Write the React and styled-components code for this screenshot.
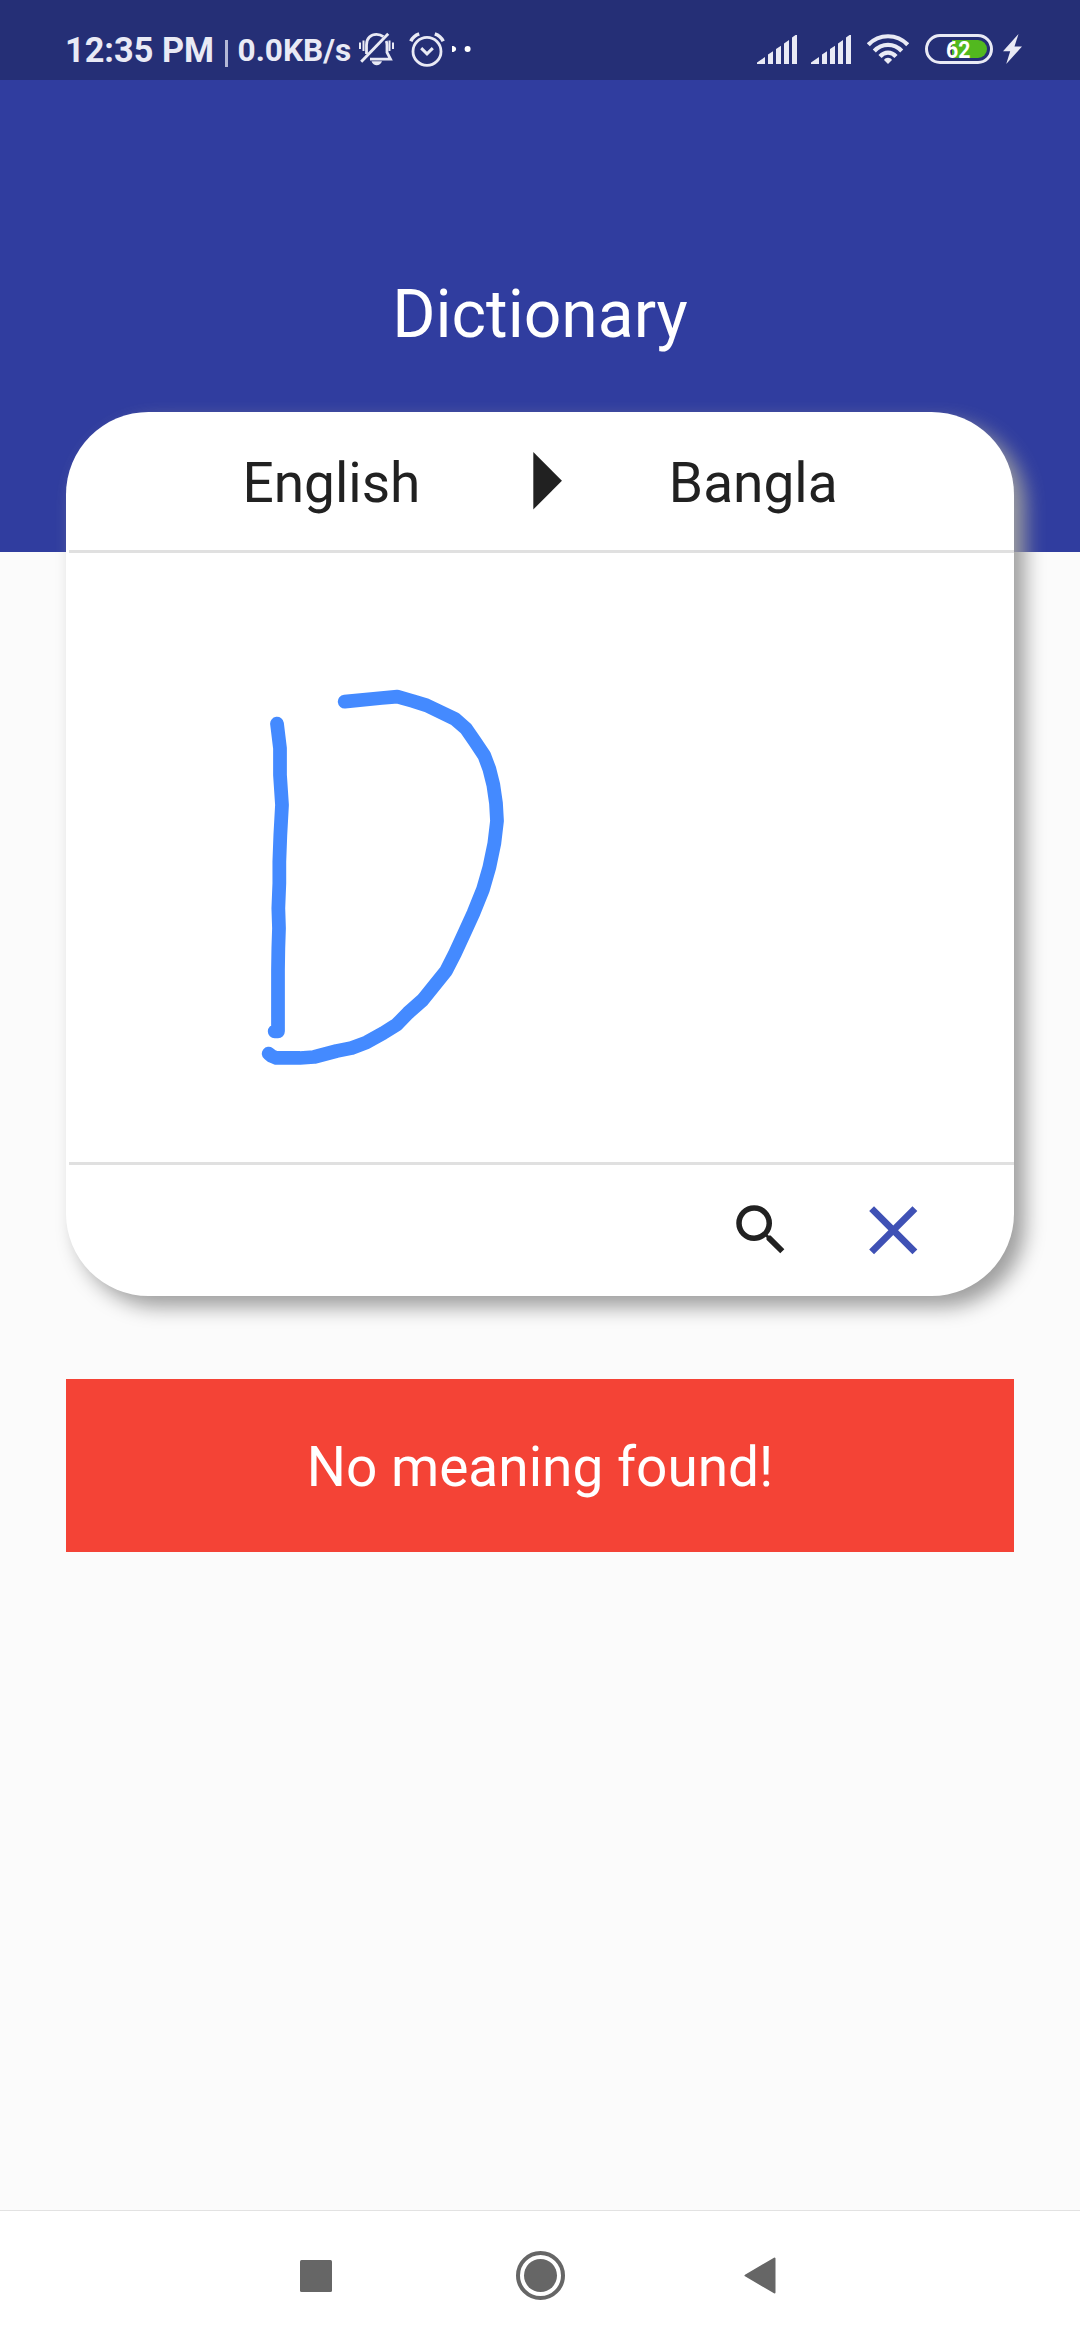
import React from "react";
import styled, { createGlobalStyle } from "styled-components";

const GlobalStyle = createGlobalStyle`
  * { box-sizing: border-box; }
  body { margin: 0; background: #fbfbfb; font-family: Roboto, "Noto Sans", sans-serif; }
  svg { display: block; flex: none; }
`;

const Screen = styled.div`
  width: 1080px;
  height: 2340px;
  display: flex;
  flex-direction: column;
  overflow: hidden;
  background: #fbfbfb;
`;

const StatusBar = styled.header`
  height: 80px;
  flex: none;
  padding: 18px 58px 0 65px;
  display: flex;
  align-items: center;
  justify-content: space-between;
  background: #252f76;
  color: #e9eaf5;
`;

const StatusGroup = styled.div`
  display: flex;
  align-items: center;
  height: 62px;
`;

const StatusText = styled.span`
  font-size: ${(p) => p.$size}px;
  line-height: 40px;
  font-weight: 700;
  white-space: pre;
  width: ${(p) => p.$width}px;
  padding-top: ${(p) => p.$drop || 0}px;
`;

const Pipe = styled.span`
  width: 3px;
  height: 27px;
  margin: 8px 10px 0 10px;
  background: #b4b8d6;
`;

const Spacer = styled.span`
  width: ${(p) => p.$w}px;
`;

const Battery = styled.div`
  position: relative;
  width: 68px;
  height: 30px;
  border: 3px solid #e9eaf5;
  border-radius: 15px;
  display: flex;
  align-items: center;
  justify-content: flex-end;
  padding: 0 3px;
`;

const Charge = styled.span`
  width: 35px;
  height: 18px;
  border-radius: 0 9px 9px 0;
  background: #52b81f;
`;

const BatteryLevel = styled.span`
  position: absolute;
  left: 18px;
  top: 0;
  font-size: 24.5px;
  font-weight: 700;
  line-height: 25px;
  color: #fff;
  transform: scaleX(0.87);
  transform-origin: left;
`;

const TitleBar = styled.div`
  height: 472px;
  flex: none;
  padding-top: 195px;
  background: #303d9f;
  text-align: center;
`;

const Title = styled.h1`
  margin: 0;
  font-size: 66px;
  font-weight: 400;
  line-height: 80px;
  color: #fff;
`;

const Main = styled.main`
  flex: 1;
  padding: 0 66px;
  margin-top: -140px;
`;

const Card = styled.section`
  position: relative;
  height: 884px;
  display: flex;
  flex-direction: column;
  background: #fff;
  border-radius: 82.5px;
  box-shadow: 11px 11px 20px #9e9e9e;
`;

const LanguageRow = styled.div`
  height: 138px;
  display: flex;
  align-items: center;
  justify-content: center;
  gap: 55.5px;
`;

const Language = styled.span`
  padding-top: 4px;
  font-size: 55px;
  line-height: 66px;
  color: #212121;
`;

const Divider = styled.hr`
  width: 945px;
  height: 3px;
  margin: 0 0 0 3px;
  border: 0;
  flex: none;
  background: #e0e0e0;
`;

const Canvas = styled.div`
  height: 608.5px;
`;

const Actions = styled.div`
  flex: 1;
  padding-right: 79.5px;
  display: flex;
  align-items: center;
  justify-content: flex-end;
  gap: 58px;
`;

const IconButton = styled.button`
  padding: 0;
  border: 0;
  background: none;
  color: ${(p) => p.$color};
`;

const Notice = styled.div`
  margin-top: 83px;
  height: 173px;
  padding-top: 3px;
  display: flex;
  align-items: center;
  justify-content: center;
  background: #f44336;
  color: #fff;
  font-size: 55px;
`;

const NavBar = styled.nav`
  height: 130px;
  flex: none;
  border-top: 1px solid #e2e2e2;
  background: #fff;
  display: flex;
  align-items: center;
  padding-left: 300px;
`;

const Signal = () => (
  <svg width="40" height="29" viewBox="0 0 40 29" fill="currentColor">
    <path d="M0 29V27.5L8 22V29ZM11 29V19.5L16 16.2V29ZM19 29V14L24 10.8V29ZM27 29V8.5L32 5V29ZM35 29V2.5L38.5 0H40V29Z" />
  </svg>
);

const MutedBell = () => (
  <svg width="35" height="34" viewBox="0 0 35 34" fill="none" stroke="currentColor" strokeWidth="2.8">
    <path d="M7.5 22V13C7.5 6 12 2.3 17.5 2.3C20.5 2.3 22.5 3.2 24.3 4.7M27.2 9C27.8 10.4 28 11.8 28 13.4V20.5L31.5 27.2H11" />
    <path d="M29.2 1.7L2.2 29.8" strokeWidth="2.9" />
    <path d="M4.5 8.5V19M30.5 8.5V19" strokeWidth="2" />
    <path d="M1 10.5V17M34 10.5V17" strokeWidth="2" />
    <path d="M12.5 29.3H23C22 32 20 33.2 17.7 33.2S13.5 32 12.5 29.3Z" fill="currentColor" stroke="none" />
  </svg>
);

const Alarm = () => (
  <svg width="36" height="35" viewBox="0 0 36 35" fill="none" stroke="currentColor" strokeWidth="2.8">
    <circle cx="18" cy="19.4" r="14" />
    <path d="M12.2 16.2L18 21.8L23.8 16.2" strokeWidth="3" />
    <path d="M1.8 9.2C3.4 5.8 6.6 3 10.2 1.8M34.2 9.2C32.6 5.8 29.4 3 25.8 1.8" strokeWidth="3.5" />
  </svg>
);

const Overflow = () => (
  <svg width="19" height="6" viewBox="0 0 19 6" fill="#fff">
    <path d="M0 0H1.5Q4.2 0.8 4.2 3T1.5 6H0Z" />
    <circle cx="15.6" cy="3" r="3" />
  </svg>
);

const Wifi = () => (
  <svg width="42" height="30" viewBox="0 0 42 30" fill="none" stroke="currentColor" strokeWidth="4.2">
    <path d="M1.3 10.8C12 -0.6 30 -0.6 40.7 10.8" />
    <path d="M7.3 17C15 8.8 27 8.8 34.7 17" />
    <path d="M13 22.5C17.7 17.3 24.3 17.3 29 22.5" />
    <path d="M17 26C18.5 23 23.5 23 25 26L21 30Z" fill="currentColor" stroke="none" />
  </svg>
);

const Bolt = () => (
  <svg width="19" height="30" viewBox="0 0 19 30" fill="currentColor">
    <path d="M15.5 0L0 17.2H7.2L3.2 30L19 12.6H11.5Z" />
  </svg>
);

const RightArrow = () => (
  <svg width="137.5" height="137.5" viewBox="0 0 24 24" fill="#212121">
    <path d="M10 17l5-5-5-5v10z" />
  </svg>
);

const SearchIcon = () => (
  <svg width="66" height="66" viewBox="0 0 24 24" fill="currentColor">
    <path d="M15.5 14h-.79l-.28-.27A6.471 6.471 0 0 0 16 9.5 6.5 6.5 0 1 0 9.5 16c1.61 0 3.09-.59 4.23-1.57l.27.28v.79l5 4.99L20.49 19l-4.99-5zm-6 0C7.01 14 5 11.99 5 9.5S7.01 5 9.5 5 14 7.01 14 9.5 11.99 14 9.5 14z" />
  </svg>
);

const ClearIcon = () => (
  <svg width="82.5" height="82.5" viewBox="0 0 24 24" fill="currentColor">
    <path d="M19 6.41L17.59 5 12 10.59 6.41 5 5 6.41 10.59 12 5 17.59 6.41 19 12 13.41 17.59 19 19 17.59 13.41 12z" />
  </svg>
);

const Handwriting = () => (
  <svg width="948" height="608.5" viewBox="66 553 948 608.5">
    <g
      transform="translate(240 670) scale(0.33333)"
      fill="none"
      stroke="#448aff"
      strokeWidth="41.25"
      strokeLinecap="round"
      strokeLinejoin="round"
    >
      <polyline points="111,161 120,235 120,315 126,405 121,495 118,575 118,640 115,715 117,775 115,835 114,900 114,1084 104,1084" />
      <polyline points="314,95 425,84 472,80 518,93 560,106 645,147 678,176 705,215 733,257 748,297 760,345 768,400 771,453 763,520 748,592 729,658 700,730 674,787 645,850 618,903 548,990 504,1029 470,1064 430,1089 380,1117 335,1134 290,1143 222,1161 180,1164 109,1164 95,1158 86,1151" />
    </g>
  </svg>
);

export default function App() {
  return (
    <Screen>
      <GlobalStyle />
      <StatusBar>
        <StatusGroup>
          <StatusText $size={34.3} $width={149.5} $drop={1}>12:35 PM</StatusText>
          <Pipe />
          <StatusText $size={31.6} $width={116} $drop={4}>0.0KB/s</StatusText>
          <Spacer $w={5} />
          <MutedBell />
          <Spacer $w={15} />
          <Alarm />
          <Spacer $w={7} />
          <Overflow />
        </StatusGroup>
        <StatusGroup>
          <Signal />
          <Spacer $w={14} />
          <Signal />
          <Spacer $w={16} />
          <Wifi />
          <Spacer $w={16} />
          <Battery>
            <Charge />
            <BatteryLevel>62</BatteryLevel>
          </Battery>
          <Spacer $w={10} />
          <Bolt />
        </StatusGroup>
      </StatusBar>
      <TitleBar>
        <Title>Dictionary</Title>
      </TitleBar>
      <Main>
        <Card>
          <LanguageRow>
            <Language>English</Language>
            <RightArrow />
            <Language>Bangla</Language>
          </LanguageRow>
          <Divider />
          <Canvas>
            <Handwriting />
          </Canvas>
          <Divider />
          <Actions>
            <IconButton $color="#212121" aria-label="Search">
              <SearchIcon />
            </IconButton>
            <IconButton $color="#3f51b5" aria-label="Clear">
              <ClearIcon />
            </IconButton>
          </Actions>
        </Card>
        <Notice>No meaning found!</Notice>
      </Main>
      <NavBar>
        <svg width="32" height="32" viewBox="0 0 32 32">
          <rect width="32" height="32" rx="1.5" fill="#666" />
        </svg>
        <Spacer $w={184} />
        <svg width="49" height="49" viewBox="0 0 49 49">
          <circle cx="24.5" cy="24.5" r="22.5" fill="none" stroke="#666" strokeWidth="4" />
          <circle cx="24.5" cy="24.5" r="16.5" fill="#666" />
        </svg>
        <Spacer $w={179} />
        <svg width="32" height="37" viewBox="0 0 32 37">
          <path d="M1.5 18.5L30.5 1.5V35.5Z" fill="#666" stroke="#666" strokeWidth="2" strokeLinejoin="round" />
        </svg>
      </NavBar>
    </Screen>
  );
}
